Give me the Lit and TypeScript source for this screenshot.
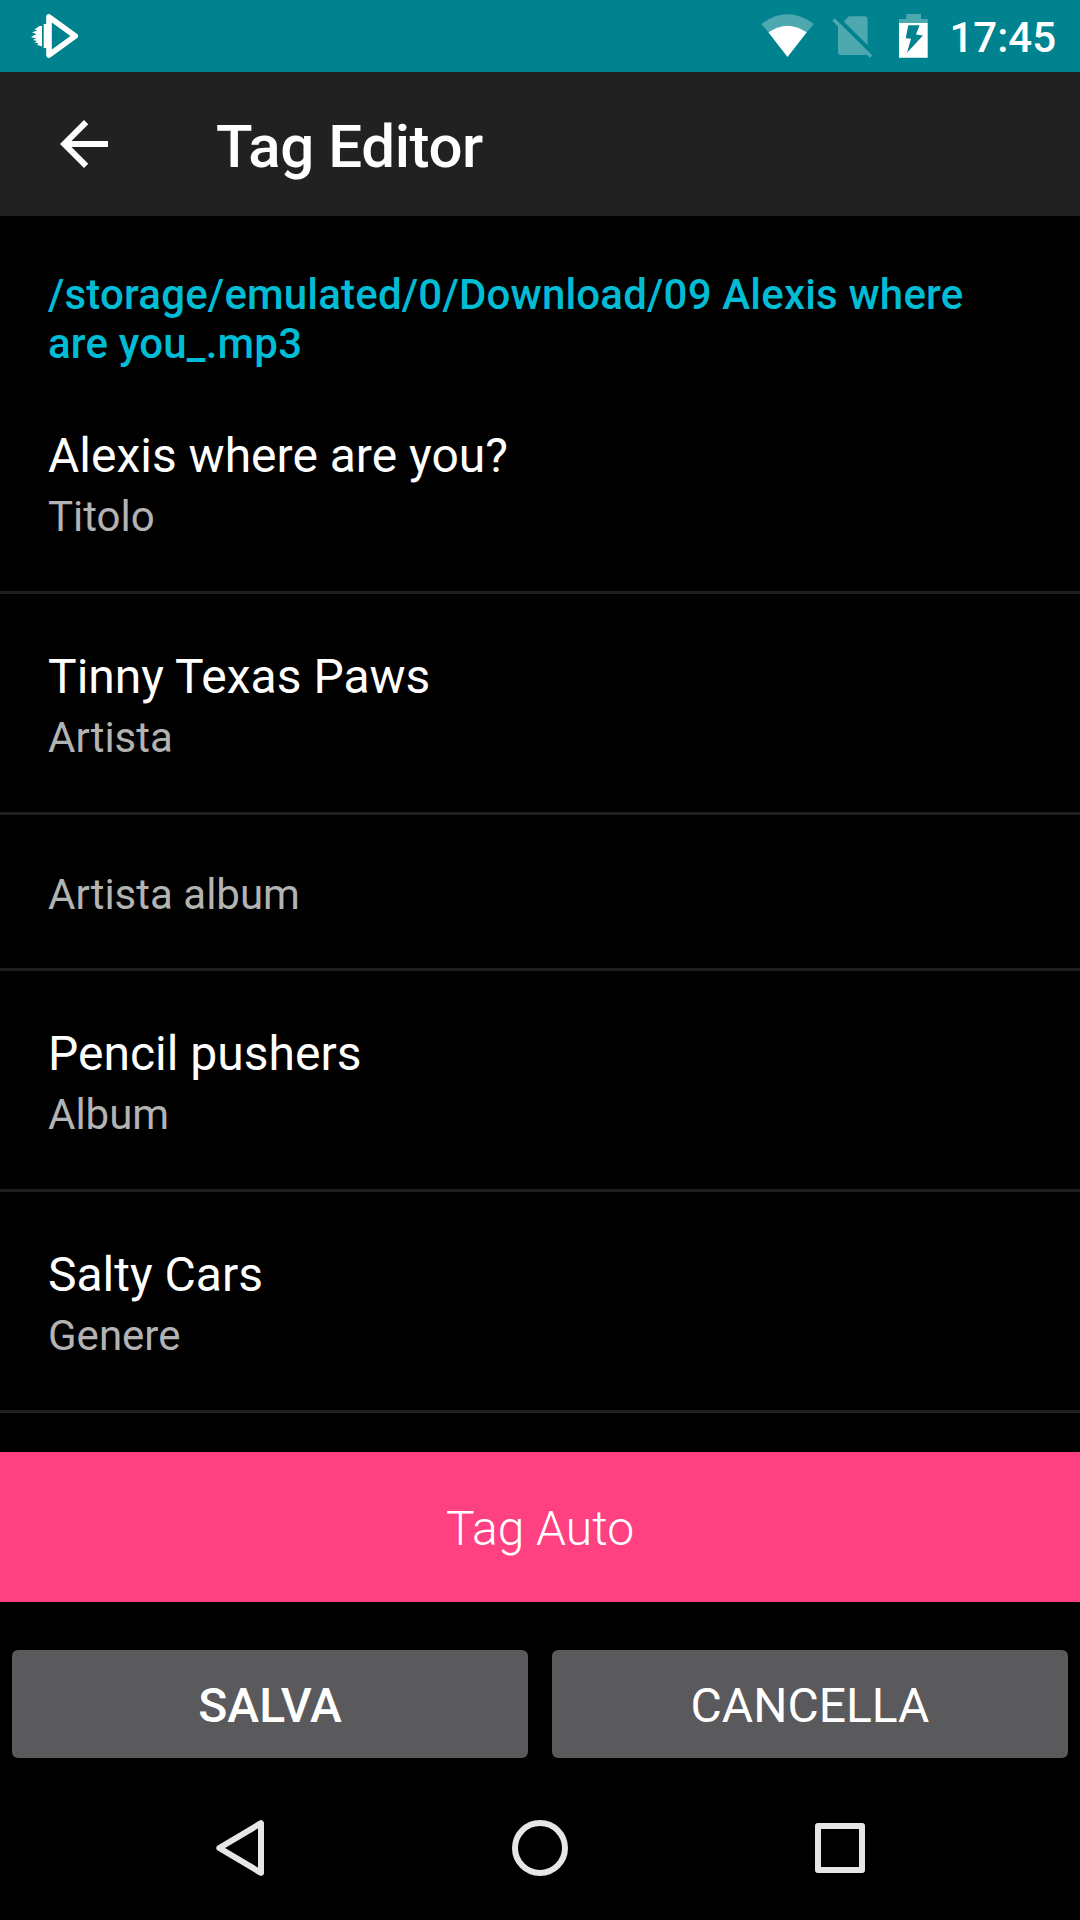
import { LitElement, html, css } from "lit";
import { customElement } from "lit/decorators.js";

interface Field { value: string; label: string }

const FIELDS: Field[] = [
  { value: "Alexis where are you?", label: "Titolo" },
  { value: "Tinny Texas Paws", label: "Artista" },
  { value: "", label: "Artista album" },
  { value: "Pencil pushers", label: "Album" },
  { value: "Salty Cars", label: "Genere" },
];

@customElement("app-root")
export class AppRoot extends LitElement {
  static styles = css`
    :host { display: block; }
    * { box-sizing: border-box; }
    .screen { width: 1080px; height: 1920px; background: #000; color: #fff; display: flex; flex-direction: column; overflow: hidden; font-family: Roboto, sans-serif; }
    svg { display: block; flex: none; }
    .status { flex: none; height: 72px; background: #00838f; display: flex; align-items: center; padding-right: 24px; }
    .clock { font-size: 42px; font-weight: 500; line-height: 72px; padding-top: 3px; margin-left: 9px; width: 110px; text-align: right; white-space: nowrap; }
    .spacer { flex: 1; }
    .toolbar { flex: none; height: 144px; background: #212121; display: flex; align-items: center; padding-left: 48px; }
    .title { margin: 5px 0 0 96px; font-size: 60px; font-weight: 500; line-height: 72px; letter-spacing: -0.4px; }
    .content { flex: none; height: 1236px; overflow: hidden; }
    .path { padding: 54px 96px 0 48px; height: 152px; color: #00bcd4; font-size: 42px; font-weight: 500; line-height: 49px; letter-spacing: 0.18px; }
    .field { padding: 55px 48px 0; border-bottom: 3px solid #1f1f1f; height: 221px; }
    .first { height: 226px; padding-top: 60px; }
    .empty { height: 156px; }
    .value { font-size: 48px; line-height: 56px; margin-bottom: 8px; }
    .label { font-size: 42px; line-height: 49px; color: #b3b3b3; }
    .auto { flex: none; height: 150px; padding-top: 2px; background: #ff4081; font-size: 48px; font-weight: 300; display: flex; align-items: center; justify-content: center; }
    .actions { flex: none; height: 174px; padding: 48px 12px 18px; display: grid; grid-template-columns: 1fr 1fr; gap: 24px; }
    .btn { background: #5a595b; border-radius: 6px; font-size: 48px; padding-top: 2px; display: flex; align-items: center; justify-content: center; }
    .primary { font-weight: 500; }
  `;

  render() {
    return html`<div class="screen">
      <div class="status">
        <svg width="90" height="72" viewBox="0 0 90 72">
          <path d="M49 16.9L75.2 36L49 55.1Z" fill="none" stroke="#fff" stroke-width="5.6" stroke-linejoin="round"/>
          <path d="M43.7 24H48V48H43.7Z" fill="#fff"/>
          <path d="M42 26H39.5L34.5 29.5L37.5 30.5L32 32.3L36.5 34.3L34 35.3L31 37.3L36 38.3L33 40L37 41L34.4 42.5L38.5 43.2L37 44.7L42 46.5Z" fill="#fff"/>
        </svg>
        <div class="spacer"></div>
        <svg width="180" height="72" viewBox="757 0 180 72">
          <path d="M761.3 24Q787.5 4.6 813.8 24L806.8 32.3Q787.5 19 768.3 32.3Z" fill="#fff" fill-opacity=".3"/>
          <path d="M768.3 32.3Q787.5 19 806.8 32.3L787.5 57Z" fill="#fff"/>
          <g fill="#fff" fill-opacity=".3">
            <path d="M849 16.3H864.3Q867.6 16.3 867.6 19.6V45L843.7 21.6Z"/>
            <path d="M832.3 20.7L834.7 18.3L872.2 55.2L869.8 57.8L866.4 54.4Q865.5 55 864.3 55H841.3Q838 55 838 51.7V26.4Z"/>
            <path d="M899 23V19H906.3V14H921V19H927.7V23Z"/>
          </g>
          <path fill="#fff" fill-rule="evenodd" d="M899 23H927.7V57.8H899ZM908.3 25.3L905.7 38.3L911 38.7L907 52.7L923 35.5L916 34.5L919.5 25.3Z"/>
        </svg>
        <div class="clock">17:45</div>
      </div>
      <div class="toolbar">
        <svg width="72" height="72" viewBox="0 0 24 24"><path fill="#fff" d="M20 11H7.83l5.59-5.59L12 4l-8 8 8 8 1.41-1.41L7.83 13H20v-2z"/></svg>
        <div class="title">Tag Editor</div>
      </div>
      <div class="content">
        <div class="path">/storage/emulated/0/Download/09 Alexis where are you_.mp3</div>
        ${FIELDS.map((f, i) => html`<div class="field ${i === 0 ? "first" : ""} ${f.value ? "" : "empty"}">
          ${f.value ? html`<div class="value">${f.value}</div>` : ""}
          <div class="label">${f.label}</div>
        </div>`)}
      </div>
      <div class="auto">Tag Auto</div>
      <div class="actions"><div class="btn primary">SALVA</div><div class="btn">CANCELLA</div></div>
      <svg width="1080" height="144" viewBox="0 1776 1080 144" fill="none" stroke="#e6e6e6" stroke-width="6" stroke-linejoin="round">
        <path d="M219.3 1848L261 1823.2V1872.8Z"/>
        <circle cx="540" cy="1848" r="25"/>
        <rect x="818" y="1826" width="44" height="44"/>
      </svg>
    </div>`;
  }
}
